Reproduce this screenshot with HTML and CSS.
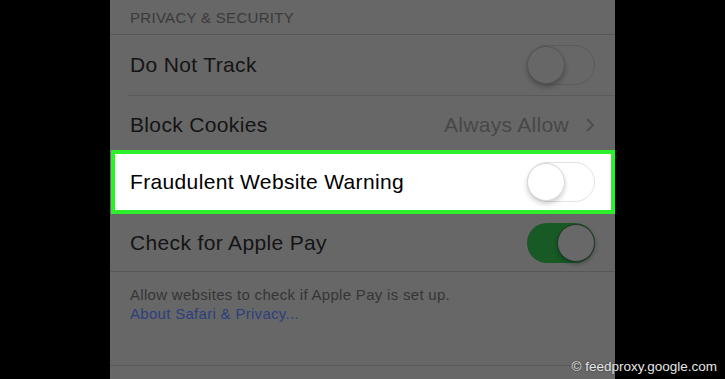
FILE: index.html
```html
<!DOCTYPE html>
<html>
<head>
<meta charset="utf-8">
<link rel="stylesheet" href="styles.css">
</head>
<body>
<div class="screen">
  <div class="side"></div>
  <div class="panel">
    <div class="header">PRIVACY &amp; SECURITY</div>
    <div class="row row1">
      <span class="label">Do Not Track</span>
      <div class="toggle dim-off"><div class="knob"></div></div>
    </div>
    <div class="row row2">
      <span class="label">Block Cookies</span>
      <span class="detail">Always Allow<svg class="chev" width="10" height="16" viewBox="0 0 10 16"><path d="M2 2 L8 8 L2 14" fill="none" stroke="#4e4e4e" stroke-width="2"/></svg></span>
    </div>
    <div class="row highlight">
      <span class="label">Fraudulent Website Warning</span>
      <div class="toggle off"><div class="knob"></div></div>
    </div>
    <div class="row row4">
      <span class="label">Check for Apple Pay</span>
      <div class="toggle on"><div class="knob"></div></div>
    </div>
    <div class="footer">
      <div>Allow websites to check if Apple Pay is set up.</div>
      <div class="link">About Safari &amp; Privacy...</div>
    </div>
    <div class="bottom"></div>
  </div>
  <div class="side grow"></div>
</div>
<div class="watermark">© feedproxy.google.com</div>
</body>
</html>
```
FILE: styles.css
```css
html, body {
  margin: 0;
  padding: 0;
  background: #000;
  width: 725px;
  height: 379px;
  overflow: hidden;
  font-family: "Liberation Sans", Arial, sans-serif;
}
.screen {
  display: flex;
  height: 379px;
}
.side {
  width: 110px;
  background: #000;
}
.side.grow {
  flex: 1;
}
.panel {
  width: 505px;
  background: #676767;
  display: flex;
  flex-direction: column;
}
.header {
  border-bottom: 1px solid #575757;
  box-sizing: border-box;
  height: 35px;
  padding: 9px 0 0 20px;
  font-size: 15px;
  letter-spacing: 0.3px;
  color: #3a3a3a;
}
.row {
  display: flex;
  align-items: center;
  justify-content: space-between;
  box-sizing: border-box;
  padding: 0 20px;
}
.label {
  font-size: 21px;
  letter-spacing: 0.35px;
  color: #141414;
}
.row1 {
  height: 61px;
  border-bottom: 1px solid #5a5a5a;
  margin-left: 18px;
  padding-left: 2px;
}
.row2 {
  height: 54px;
  padding-top: 4px;
}
.detail {
  display: flex;
  align-items: center;
  gap: 16px;
  font-size: 21px;
  letter-spacing: 0.3px;
  color: #474747;
  margin-left: auto;
}
.highlight {
  height: 64px;
  margin-left: 1px;
  border: 4px solid #2bf02b;
  background: #fff;
  padding: 0 16px 0 15px;
}
.highlight .label {
  color: #000;
}
.row4 {
  height: 58px;
  border-bottom: 1px solid #575757;
  padding-top: 1px;
}
.toggle {
  width: 68px;
  height: 40px;
  box-sizing: border-box;
  border-radius: 20px;
  display: flex;
  align-items: center;
}
.knob {
  width: 38px;
  height: 38px;
  border-radius: 50%;
  box-sizing: border-box;
}
.toggle.off {
  border: 1.5px solid #e3e3e3;
  background: #fff;
  justify-content: flex-start;
}
.toggle.off .knob {
  background: #fff;
  border: 1px solid #d8d8d8;
  box-shadow: 0 3px 5px rgba(0,0,0,0.18);
  margin-left: -1px;
}
.toggle.dim-off {
  border: 1.5px solid #5b5b5b;
  background: #676767;
  justify-content: flex-start;
}
.toggle.dim-off .knob {
  background: #676767;
  border: 1px solid #555;
  box-shadow: 0 3px 5px rgba(0,0,0,0.25);
  margin-left: -1px;
}
.toggle.on {
  background: #185a26;
  justify-content: flex-end;
}
.toggle.on .knob {
  background: #686868;
  border: 1.5px solid #263528;
  box-shadow: 0 2px 4px rgba(0,0,0,0.3);
}
.footer {
  height: 94px;
  box-sizing: border-box;
  padding: 13px 20px 0 20px;
  font-size: 15px;
  line-height: 19px;
  letter-spacing: 0.3px;
  color: #353535;
  border-bottom: 1px solid #5a5a5a;
}
.link {
  color: #2c3f7e;
}
.bottom {
  flex: 1;
}
.watermark {
  position: absolute;
  right: 8px;
  bottom: 5px;
  font-family: "Liberation Sans", Arial, sans-serif;
  font-size: 13.5px;
  color: #e6e6e6;
  text-shadow: 0 0 2px rgba(0,0,0,0.6);
}
```
